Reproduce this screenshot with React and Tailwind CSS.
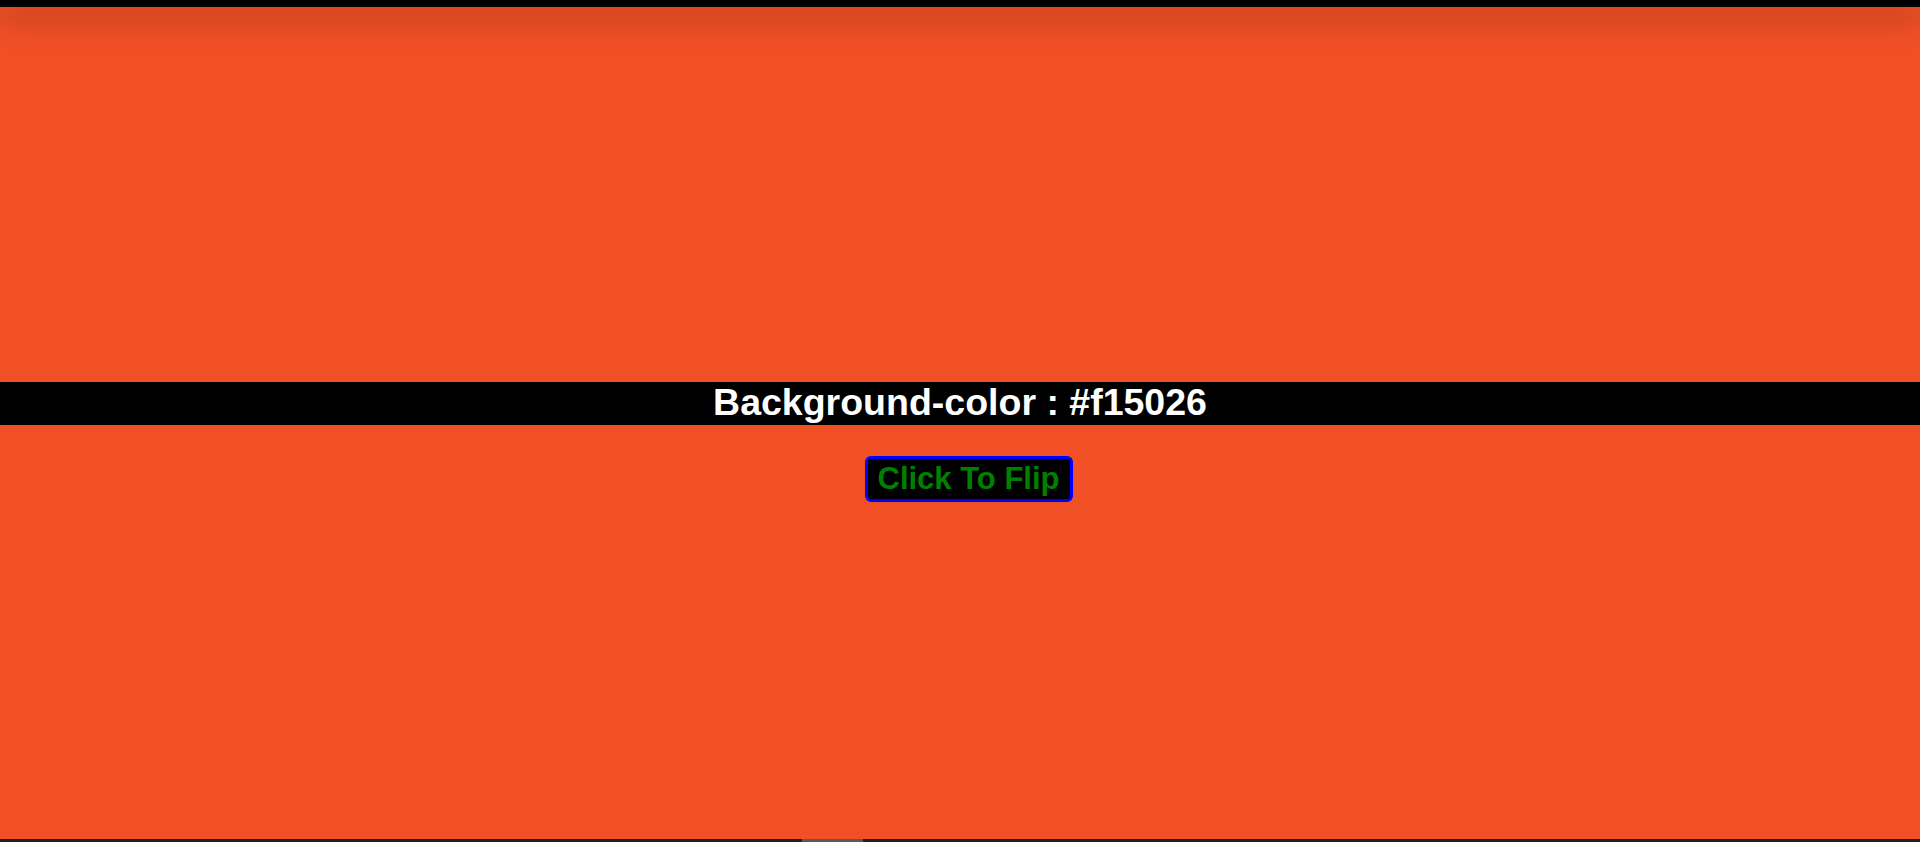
export default function App() {
    return (
        <div
            className="flex h-[842px] flex-col overflow-hidden bg-[#f15026]"
            style={{ fontFamily: '"Liberation Sans", Arial, sans-serif' }}
        >
            <div className="relative z-10 h-[7px] shrink-0 bg-black shadow-[0_8px_30px_rgba(0,0,0,0.5)]" />

            <main className="flex flex-1 flex-col items-center pt-[375px]">
                <h1 className="h-[43px] w-full bg-black text-center text-[37.5px] font-bold leading-[40px] text-white">
                    Background-color : #f15026
                </h1>
                <button className="ml-[17px] mt-[31px] h-[46px] w-[208px] rounded-[6px] border-[3px] border-[#0000ff] bg-black text-[31px] font-bold leading-[40px] text-[#008000]">
                    Click To Flip
                </button>
            </main>

            <div className="flex h-[3px] shrink-0 bg-[#202020]">
                <div className="ml-[802px] w-[61px] bg-[#5a5a5a]" />
            </div>
        </div>
    );
}
